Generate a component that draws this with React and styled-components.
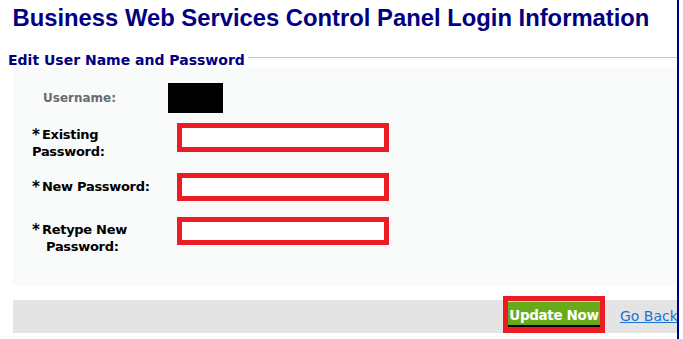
import React from "react";
import styled, { createGlobalStyle } from "styled-components";

const GlobalStyle = createGlobalStyle`
  html, body { margin: 0; padding: 0; background: #fff; }
  body { font-family: "DejaVu Sans", Verdana, sans-serif; }
`;

const Viewport = styled.div`
  width: 677px;
  height: 339px;
  overflow: hidden;
  border-right: 2px solid #00008b;
`;

const Title = styled.h1`
  margin: 4px 0 0;
  padding-left: 12.5px;
  font: bold 23.8px/28px "Liberation Sans", Arial, sans-serif;
  color: #000080;
  white-space: nowrap;
`;

const Section = styled.section`
  margin-top: 20px;
`;

const LegendRow = styled.div`
  display: flex;
  align-items: flex-start;
  gap: 3px;
  padding-left: 8px;
`;

const Legend = styled.h2`
  margin: 0;
  font: bold 14px/16px "DejaVu Sans", Verdana, sans-serif;
  color: #000080;
  white-space: nowrap;
`;

const LegendLine = styled.div`
  flex: 1;
  margin-top: 5px;
  border-top: 1px solid #b6c6ec;
`;

const Panel = styled.div`
  margin-left: 13px;
  background: #f9fafa;
  padding: 15px 0 30px;
`;

const UserRow = styled.div`
  display: flex;
  align-items: center;
  height: 30px;
  padding-left: 30px;
`;

const UserLabel = styled.span`
  width: 125px;
  font: bold 12px/16px "DejaVu Sans", Verdana, sans-serif;
  color: #6b6b6b;
`;

const Masked = styled.div`
  width: 55px;
  height: 30px;
  background: #000;
`;

const FieldRow = styled.div`
  display: flex;
  align-items: flex-start;
  margin-top: ${(p) => p.$gap}px;
  padding-left: 19px;
`;

const FieldLabel = styled.label`
  width: 145px;
  margin-top: ${(p) => p.$offset}px;
  font: bold 13px/17px "DejaVu Sans", Verdana, sans-serif;
  letter-spacing: -0.3px;
  color: #000;
  white-space: nowrap;
`;

const Star = styled.span`
  display: inline-block;
  width: 10px;
  font-size: 15px;
  line-height: 10px;
  letter-spacing: 0;
  vertical-align: -1px;
`;

const Indent = styled.span`
  padding-left: ${(p) => p.$by}px;
`;

const PassInput = styled.input`
  box-sizing: border-box;
  width: 212px;
  height: ${(p) => p.$h}px;
  margin: 0;
  padding: 0 4px;
  border: 5px solid #ed1c24;
  background: #fff;
  outline: none;
`;

const Footer = styled.div`
  display: flex;
  align-items: flex-end;
  gap: 15px;
  height: 33px;
  margin: 15px 0 0 13px;
  padding-left: 490px;
  background: #e4e4e4;
`;

const ButtonFrame = styled.div`
  border: 5px solid #ed1c24;
  border-bottom-width: 6px;
  flex-shrink: 0;
`;

const UpdateButton = styled.button`
  display: block;
  box-sizing: border-box;
  width: 92px;
  height: 26px;
  margin: 0;
  padding: 3px 0 0;
  border: none;
  border-top: 1px solid #cfe0bf;
  border-bottom: 2px solid #000;
  background: #67ab1b;
  color: #fff;
  font: bold 13.5px/20px "DejaVu Sans", Verdana, sans-serif;
  letter-spacing: -0.35px;
  text-align: center;
  white-space: nowrap;
  cursor: pointer;
`;

const BackLink = styled.a`
  align-self: center;
  flex-shrink: 0;
  font: 14px/17px "DejaVu Sans", Verdana, sans-serif;
  color: #1f6fd1;
  text-decoration: underline;
  white-space: nowrap;
`;

export default function App() {
  return (
    <>
      <GlobalStyle />
      <Viewport>
        <Title>Business Web Services Control Panel Login Information</Title>
        <Section>
          <LegendRow>
            <Legend>Edit User Name and Password</Legend>
            <LegendLine />
          </LegendRow>
          <Panel>
            <UserRow>
              <UserLabel>Username:</UserLabel>
              <Masked />
            </UserRow>
            <FieldRow $gap={10}>
              <FieldLabel $offset={3}>
                <Star>*</Star>Existing
                <br />
                Password:
              </FieldLabel>
              <PassInput type="password" $h={29} />
            </FieldRow>
            <FieldRow $gap={13}>
              <FieldLabel $offset={5}>
                <Star>*</Star>New Password:
              </FieldLabel>
              <PassInput type="password" $h={28} />
            </FieldRow>
            <FieldRow $gap={16}>
              <FieldLabel $offset={4}>
                <Star>*</Star>Retype New
                <br />
                <Indent $by={14}>Password:</Indent>
              </FieldLabel>
              <PassInput type="password" $h={28} />
            </FieldRow>
          </Panel>
          <Footer>
            <ButtonFrame>
              <UpdateButton type="button">Update Now</UpdateButton>
            </ButtonFrame>
            <BackLink href="#">Go Back</BackLink>
          </Footer>
        </Section>
      </Viewport>
    </>
  );
}
